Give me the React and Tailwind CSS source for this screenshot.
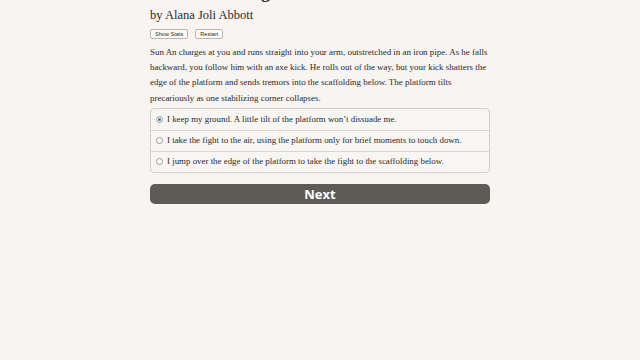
import { useState } from 'react';

const choices = [
    'I keep my ground. A little tilt of the platform won\u2019t dissuade me.',
    'I take the fight to the air, using the platform only for brief moments to touch down.',
    'I jump over the edge of the platform to take the fight to the scaffolding below.',
];

export default function App() {
    const [selected, setSelected] = useState(0);

    return (
        <div className="min-h-screen w-full bg-[#f7f4f1] overflow-hidden" style={{ height: 360 }}>
            <div className="w-[340px] mx-auto text-[#2b2a28] font-['Liberation_Serif','Times_New_Roman',serif]">
                <h1 className="-mt-[18px] text-[18px] leading-[20px] font-bold">Choice of Kung Fu</h1>
                <h2 className="mt-[6px] text-[12.5px] leading-[14px]">by Alana Joli Abbott</h2>
                <div className="mt-[7px] flex gap-[7px]">
                    <button className="h-[10px] px-[4px] border border-[#b9b6b2] rounded-[2px] bg-[#fbfaf8] text-[5.6px] leading-[8px] font-['Liberation_Sans',sans-serif]">Show Stats</button>
                    <button className="h-[10px] px-[4px] border border-[#b9b6b2] rounded-[2px] bg-[#fbfaf8] text-[5.6px] leading-[8px] font-['Liberation_Sans',sans-serif]">Restart</button>
                </div>
                <p className="mt-[6px] text-[8.95px] leading-[15.2px]">
                    Sun An charges at you and runs straight into your arm, outstretched in an iron pipe. As he falls backward, you follow him with an axe kick. He rolls out of the way, but your kick shatters the edge of the platform and sends tremors into the scaffolding below. The platform tilts precariously as one stabilizing corner collapses.
                </p>
                <div className="mt-[2px] border border-[#d3cfcb] rounded-[4px] bg-[#f8f6f3]">
                    {choices.map((c, i) => (
                        <label
                            key={i}
                            onClick={() => setSelected(i)}
                            className={`flex items-center h-[21px] px-[5px] gap-[4px] text-[8.9px] cursor-pointer ${i > 0 ? 'border-t border-[#d8d4d0]' : ''}`}
                        >
                            <span className="w-[7px] h-[7px] rounded-full border border-[#9b9894] bg-white flex items-center justify-center">
                                {selected === i && <span className="w-[3px] h-[3px] rounded-full bg-[#3b6fb6]"></span>}
                            </span>
                            <span>{c}</span>
                        </label>
                    ))}
                </div>
                <button className="mt-[11px] w-full h-[20px] rounded-[5px] bg-[#5e5b57] text-white text-[13px] font-bold font-['Open_Sans','Liberation_Sans',sans-serif] leading-[20px]">
                    Next
                </button>
            </div>
        </div>
    );
}
